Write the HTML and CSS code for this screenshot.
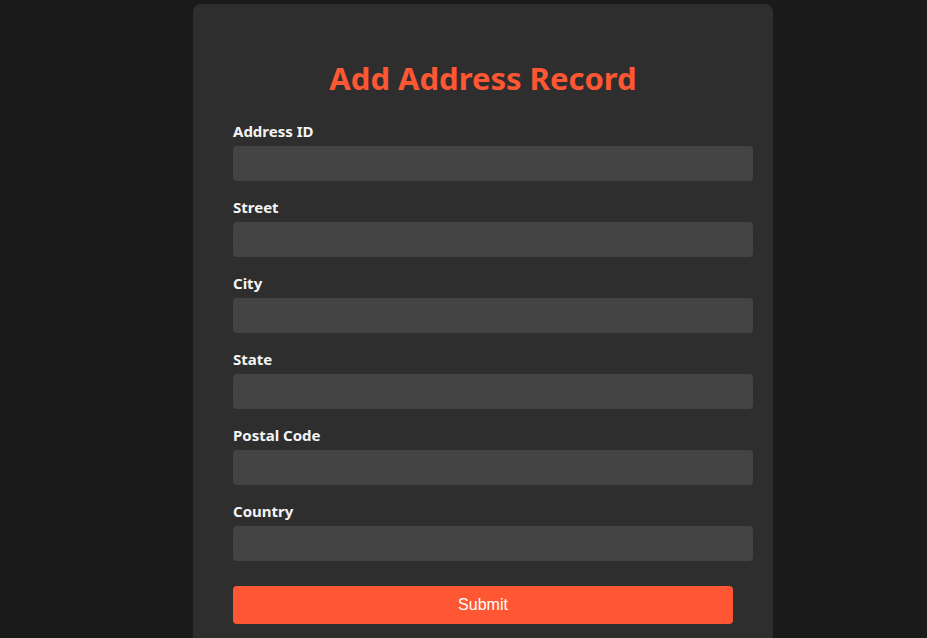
FILE: index.html
```html
<!DOCTYPE html>
<html>
<head>
<meta charset="utf-8">
<link rel="stylesheet" href="styles.css">
</head>
<body>
<div class="card">
  <h2 class="title">Add Address Record</h2>
  <form class="form">
    <label class="label">Address ID</label>
    <input class="field" type="text">
    <label class="label">Street</label>
    <input class="field" type="text">
    <label class="label">City</label>
    <input class="field" type="text">
    <label class="label">State</label>
    <input class="field" type="text">
    <label class="label">Postal Code</label>
    <input class="field" type="text">
    <label class="label">Country</label>
    <input class="field" type="text">
    <button class="submit" type="button">Submit</button>
  </form>
</div>
</body>
</html>
```
FILE: styles.css
```css
html, body {
  margin: 0;
  background: #1a1a1a;
}
body {
  padding: 4px 0 0 39px;
  font-family: "Noto Sans", "Open Sans", sans-serif;
}
.card {
  width: 500px;
  margin: 0 auto;
  padding: 20px 40px 40px;
  background: #2e2e2e;
  border-radius: 8px;
}
.title {
  margin: 33px 0 21px;
  text-align: center;
  color: #ff5733;
  font-size: 31px;
  font-weight: 700;
  line-height: 42px;
}
.form {
  display: block;
}
.label {
  display: block;
  margin-bottom: 5px;
  padding-top: 1px;
  color: #f4f4f4;
  font-size: 15px;
  font-weight: 700;
  line-height: 20px;
}
.field {
  display: block;
  width: 500px;
  height: 15px;
  padding: 10px;
  margin: 0 0 15px;
  border: none;
  border-radius: 4px;
  background: #444;
  color: #fff;
  font: 13px "Liberation Sans", sans-serif;
}
.submit {
  display: block;
  width: 500px;
  height: 38px;
  margin-top: 25px;
  border: none;
  border-radius: 4px;
  background: #ff5733;
  color: #fff;
  font: 16px "Liberation Sans", Arial, sans-serif;
}
```
